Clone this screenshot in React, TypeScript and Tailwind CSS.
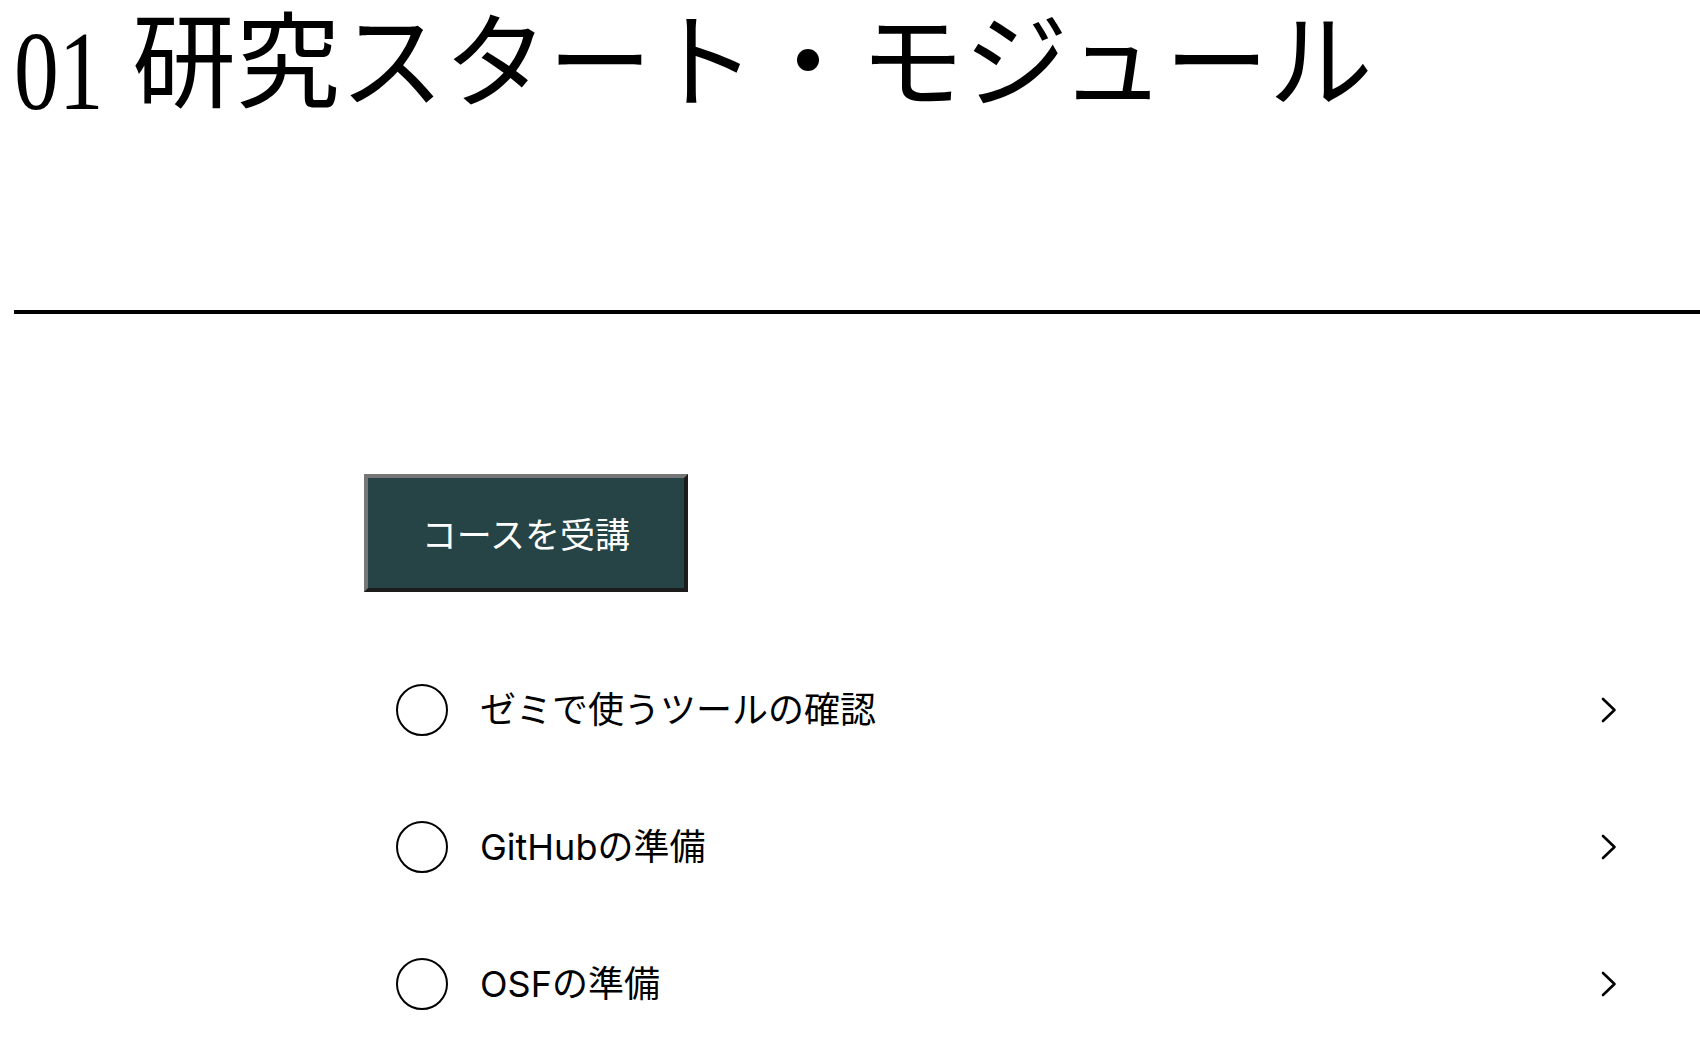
import React from "react";

const items = ["ゼミで使うツールの確認", "GitHubの準備", "OSFの準備"];

function Chevron() {
  return (
    <svg width="16" height="26" viewBox="0 0 16 26" fill="none">
      <polyline
        points="2,2 13.5,13 2,24"
        stroke="#000"
        strokeWidth="2.6"
        strokeLinecap="round"
        strokeLinejoin="round"
      />
    </svg>
  );
}

export default function App() {
  return (
    <div
      className="min-h-screen bg-white pl-[14px] text-black"
      style={{ fontFamily: '"Noto Sans CJK JP", sans-serif' }}
    >
      <h1 className="flex h-[128px] items-start whitespace-nowrap font-normal">
        <span
          className="mt-[15px] inline-block w-[118px] origin-left scale-x-[0.8] text-[112px] leading-none"
          style={{ fontFamily: '"Liberation Serif", serif' }}
        >
          01
        </span>
        <span
          className="mt-[3px] text-[104px] leading-none"
          style={{ fontFamily: '"Noto Sans CJK JP", serif' }}
        >
          研究スタート・モジュール
        </span>
      </h1>
      <div className="mt-[182px] h-[4px] bg-black" />
      <div className="ml-[350px] mt-[160px]">
        <button
          className="flex h-[118px] w-[324px] items-center justify-center border-[4px] border-t-[#767676] border-l-[#767676] border-b-[#1c1c1c] border-r-[#1c1c1c] bg-[#264446] text-[35px] text-white"
          style={{ fontFamily: '"Noto Sans CJK JP", sans-serif' }}
        >
          コースを受講
        </button>
        <div className="mt-[49px] flex flex-col">
          {items.map((t) => (
            <div key={t} className="flex h-[137px] items-center pl-[32px] pr-[83px]">
              <div className="h-[52px] w-[52px] shrink-0 rounded-full border-2 border-black" />
              <span
                className="ml-[32px] flex-1 text-[36px] leading-none"
                style={{ fontFamily: 'Inter, "Noto Sans CJK JP", sans-serif' }}
              >
                {t}
              </span>
              <Chevron />
            </div>
          ))}
        </div>
      </div>
    </div>
  );
}
